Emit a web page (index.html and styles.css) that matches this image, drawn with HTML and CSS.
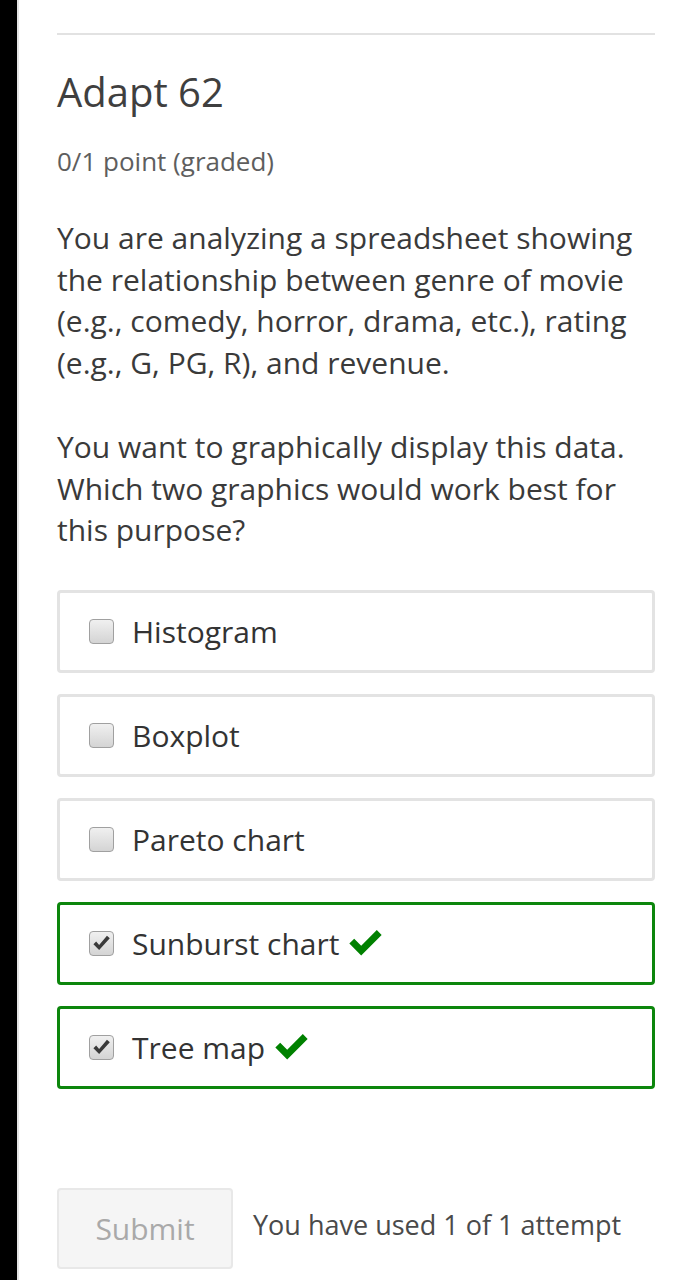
FILE: index.html
```html
<!DOCTYPE html>
<html lang="en">
<head>
    <meta charset="UTF-8">
    <meta name="viewport" content="width=device-width, initial-scale=1.0">
    <title>Adapt 62</title>
    <link rel="stylesheet" href="styles.css">
</head>
<body>
    <div class="sidebar"></div>
    <div class="main">
        <hr class="rule">
        <h2 class="title">Adapt 62</h2>
        <div class="points">0/1 point (graded)</div>
        <p class="question">You are analyzing a spreadsheet showing the relationship between genre of movie (e.g., comedy, horror, drama, etc.), rating (e.g., G, PG, R), and revenue.</p>
        <p class="question">You want to graphically display this data. Which two graphics would work best for this purpose?</p>

        <div class="choices">
            <label class="choice">
                <span class="box"></span>
                <span class="choice-text">Histogram</span>
            </label>
            <label class="choice">
                <span class="box"></span>
                <span class="choice-text">Boxplot</span>
            </label>
            <label class="choice">
                <span class="box"></span>
                <span class="choice-text">Pareto chart</span>
            </label>
            <label class="choice correct">
                <span class="box checked">
                    <svg viewBox="0 0 16 16" width="19" height="19"><path d="M1.2 8.6 L6 13.4 L15 3.6 L12.6 1.5 L6 9.2 L3.5 6.4 Z" fill="#3a3a3a"/></svg>
                </span>
                <span class="choice-text">Sunburst chart</span>
                <svg class="tick" viewBox="0 0 32 26" width="35" height="28"><path d="M1 13.5 L5.5 9 L12 15.5 L26.5 1 L31 5.5 L12 24.5 Z" fill="#008100"/></svg>
            </label>
            <label class="choice correct">
                <span class="box checked">
                    <svg viewBox="0 0 16 16" width="19" height="19"><path d="M1.2 8.6 L6 13.4 L15 3.6 L12.6 1.5 L6 9.2 L3.5 6.4 Z" fill="#3a3a3a"/></svg>
                </span>
                <span class="choice-text">Tree map</span>
                <svg class="tick" viewBox="0 0 32 26" width="35" height="28"><path d="M1 13.5 L5.5 9 L12 15.5 L26.5 1 L31 5.5 L12 24.5 Z" fill="#008100"/></svg>
            </label>
        </div>

        <div class="actions">
            <button class="submit" disabled>Submit</button>
            <span class="attempts">You have used 1 of 1 attempt</span>
        </div>
    </div>
</body>
</html>
```

FILE: styles.css
```css
body {
    margin: 0;
    padding: 0;
    display: flex;
    min-height: 1280px;
    font-family: "Open Sans", "Noto Sans", sans-serif;
    color: #3c3c3c;
    background-color: white;
}
.sidebar {
    width: 17px;
    background-color: #000;
    border-right: 2px solid #e4e4e4;
    flex-shrink: 0;
}
.main {
    flex: 1;
    padding: 33px 28px 0 38px;
}
.rule {
    border: none;
    border-top: 2px solid #e2e2e2;
    margin: 0;
}
.title {
    font-size: 40px;
    font-weight: 400;
    color: #3f3f3f;
    margin: 32px 0 0 0;
    line-height: 50px;
}
.points {
    font-size: 26px;
    color: #5e5e5e;
    margin-top: 27px;
    line-height: 34px;
}
.question {
    font-size: 30px;
    line-height: 41.5px;
    margin: 0 0 43px 0;
    color: #3a3a3a;
}
.points + .question {
    margin-top: 39px;
}
.question:last-of-type {
    margin-bottom: 39px;
}
.choices {
    display: flex;
    flex-direction: column;
    gap: 21px;
}
.choice {
    display: flex;
    align-items: center;
    height: 83px;
    box-sizing: border-box;
    border: 3px solid #e3e3e3;
    border-radius: 4px;
    padding-left: 29px;
    font-size: 30px;
    color: #333;
}
.choice.correct {
    border-color: #0c860c;
}
.box {
    width: 25px;
    height: 25px;
    box-sizing: border-box;
    border: 1px solid #a0a0a0;
    border-radius: 4px;
    background: linear-gradient(#f0f0f0, #d4d4d4);
    display: flex;
    align-items: center;
    justify-content: center;
    margin-right: 18px;
    flex-shrink: 0;
}
.tick {
    margin-left: 9px;
}
.actions {
    display: flex;
    align-items: center;
    margin-top: 99px;
}
.submit {
    width: 176px;
    height: 81px;
    font-family: "Open Sans", "Noto Sans", sans-serif;
    font-size: 30px;
    color: #a9a9a9;
    background-color: #f5f5f5;
    border: 2px solid #e8e8e8;
    border-radius: 4px;
}
.attempts {
    font-size: 27px;
    color: #4a4a4a;
    margin-left: 20px;
    margin-top: -8px;
}
```
